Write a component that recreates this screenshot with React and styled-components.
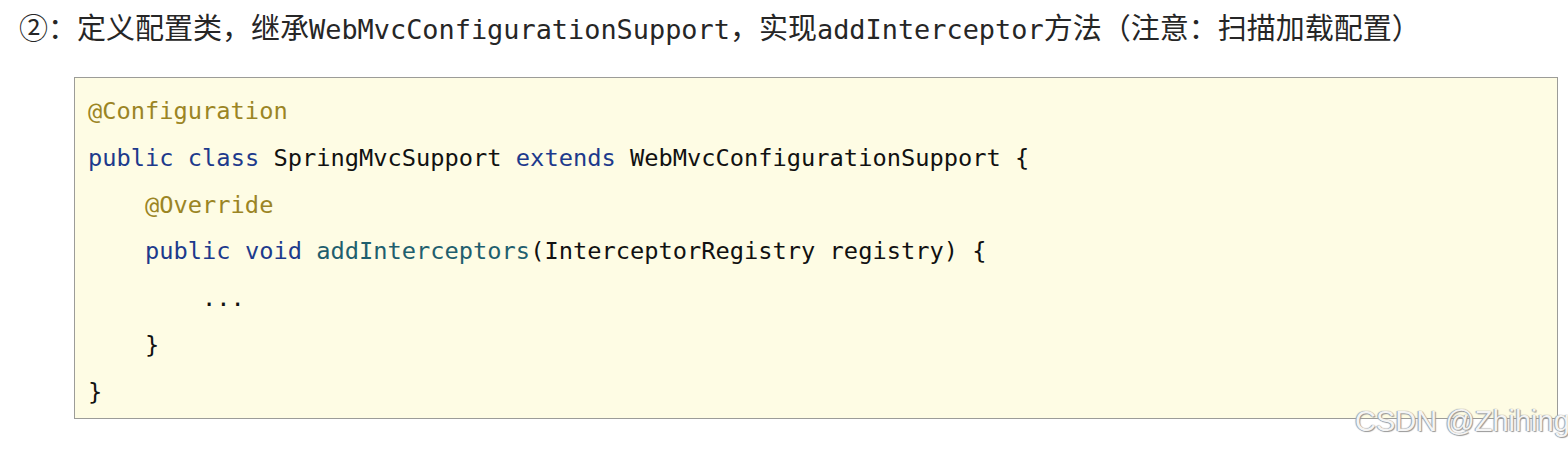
import React from "react";
import styled, { createGlobalStyle } from "styled-components";

const Global = createGlobalStyle`
  html, body { margin: 0; padding: 0; background: #ffffff; overflow: hidden; }
  body { width: 1568px; height: 451px; }
`;

const Page = styled.div`
  position: relative;
  width: 1568px;
  height: 451px;
  padding: 4px 0 0 0;
  box-sizing: border-box;
  font-family: "Noto Sans CJK SC", sans-serif;
  color: #262626;
`;

const Heading = styled.p`
  margin: 0 0 0 19px;
  font-size: 29px;
  line-height: 44px;
  height: 44px;
  white-space: nowrap;
`;

const Mono = styled.span`
  font-family: "DejaVu Sans Mono", monospace;
  font-size: 26.9px;
`;

const CodeBox = styled.pre`
  margin: 29px 0 0 74px;
  width: 1484px;
  height: 342px;
  box-sizing: border-box;
  border: 1px solid #9c9c98;
  background: #fefce4;
  padding: 10px 0 0 13px;
  font-family: "DejaVu Sans Mono", monospace;
  font-size: 23.7px;
  line-height: 46.8px;
  color: #111111;
  overflow: hidden;
`;

const Line = styled.div`
  white-space: pre;
  height: 46.8px;
`;

const Tok = styled.span`
  color: ${(p) =>
    p.$k === "ann"
      ? "#9b8524"
      : p.$k === "kw"
      ? "#1d3a8c"
      : p.$k === "fn"
      ? "#1f5f6e"
      : "#111111"};
`;

const Watermark = styled.div`
  position: absolute;
  left: 1355px;
  top: 404px;
  font-family: "Liberation Sans", Arial, sans-serif;
  font-size: 29px;
  line-height: 34px;
  white-space: nowrap;
  color: rgba(255, 255, 255, 0.92);
  text-shadow: 0 0 1px #8a8a8a, 1px 1px 1px #9a9a9a, -1px 0 1px #aaaaaa;
`;

const code = [
  [["ann", "@Configuration"]],
  [
    ["kw", "public"],
    ["", " "],
    ["kw", "class"],
    ["", " SpringMvcSupport "],
    ["kw", "extends"],
    ["", " WebMvcConfigurationSupport {"],
  ],
  [["", "    "], ["ann", "@Override"]],
  [
    ["", "    "],
    ["kw", "public"],
    ["", " "],
    ["kw", "void"],
    ["", " "],
    ["fn", "addInterceptors"],
    ["", "(InterceptorRegistry registry) {"],
  ],
  [["", "        ..."]],
  [["", "    }"]],
  [["", "}"]],
];

export default function App() {
  return (
    <Page>
      <Global />
      <Heading>
        ②：定义配置类，继承<Mono>WebMvcConfigurationSupport</Mono>，实现
        <Mono>addInterceptor</Mono>方法（注意：扫描加载配置）
      </Heading>
      <CodeBox>
        {code.map((line, i) => (
          <Line key={i}>
            {line.map(([k, t], j) => (
              <Tok key={j} $k={k}>
                {t}
              </Tok>
            ))}
          </Line>
        ))}
      </CodeBox>
      <Watermark>CSDN @Zhihing</Watermark>
    </Page>
  );
}
